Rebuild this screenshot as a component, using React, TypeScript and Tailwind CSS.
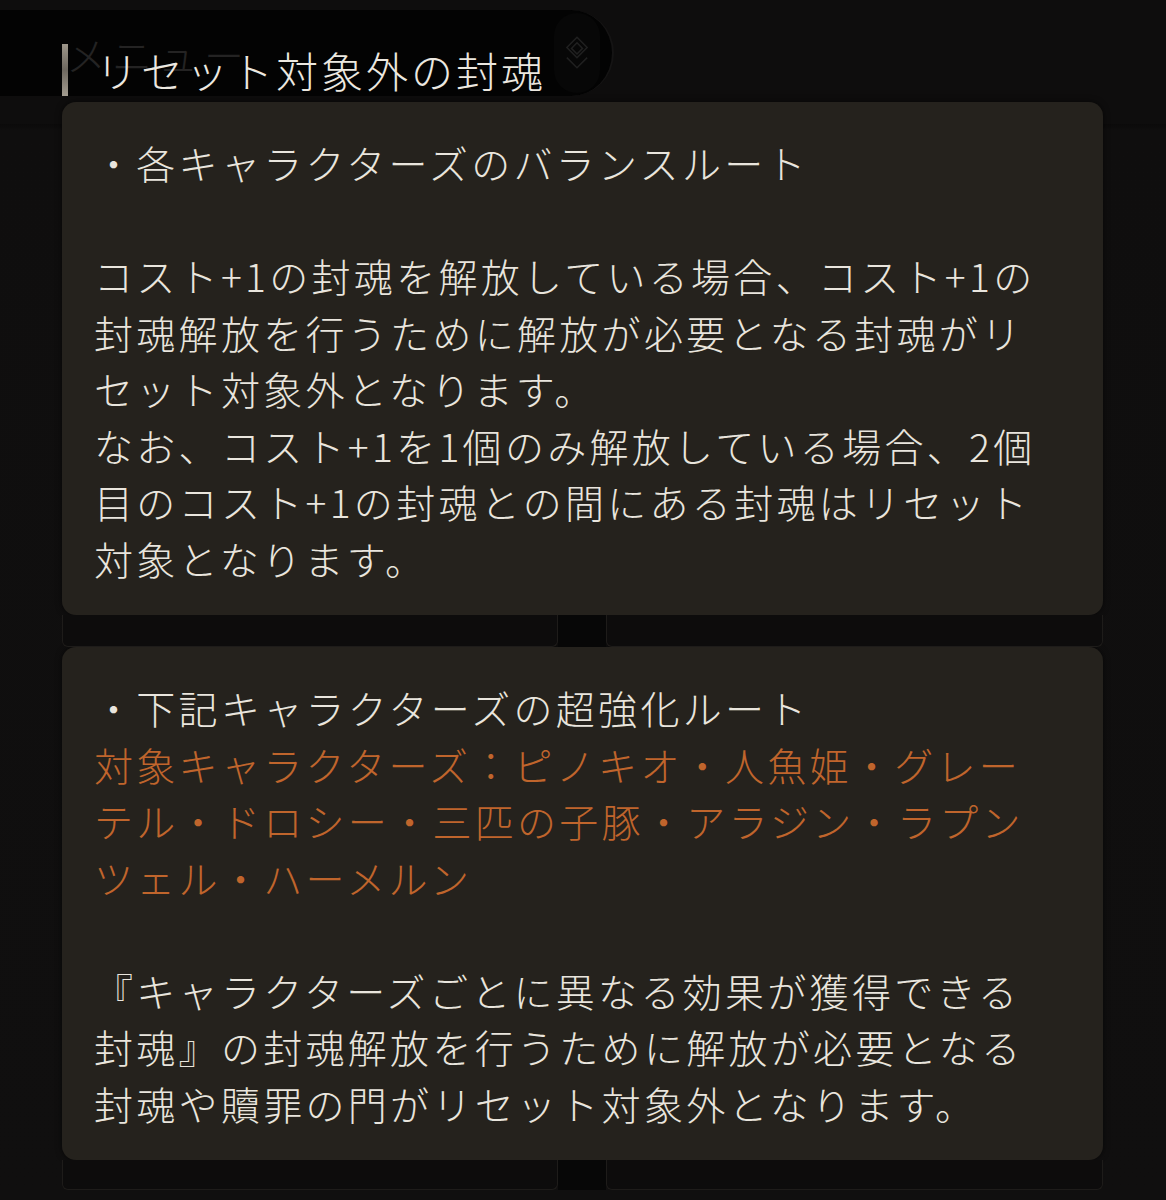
import { ReactNode } from "react";

const jp = "font-['Noto_Sans_CJK_JP','Noto_Sans',sans-serif]";

const Line = ({ children, orange }: { children?: ReactNode; orange?: boolean }) => (
  <div
    className={`h-[56.5px] whitespace-nowrap text-[39px] leading-[56.5px] tracking-[3.3px] font-light ${
      orange ? "text-[#c0652c]" : "text-[#e9e5dd]"
    }`}
  >
    {children ?? "\u00a0"}
  </div>
);

const Frames = ({ h }: { h: string }) => (
  <div className={`flex ${h} pl-[62px] pr-[63px]`}>
    <div className="w-[496px] rounded-b-md border-x border-b border-[#1e1c1a] bg-[#0d0c0c]" />
    <div className="w-[48px] bg-[#070707]" />
    <div className="flex-1 rounded-b-md border-x border-b border-[#1e1c1a] bg-[#0d0c0c]" />
  </div>
);

const Card = ({ children }: { children: ReactNode }) => (
  <div className="ml-[62px] w-[1041px] rounded-[14px] bg-[#25221d] pl-[32px] pt-[32px] pb-[29px] shadow-[0_0_6px_rgba(0,0,0,0.6)]">
    {children}
  </div>
);

export default function App() {
  return (
    <div
      className={`${jp} h-[1200px] w-[1166px] overflow-hidden bg-[linear-gradient(to_bottom,#0e0d0d_0px,#0e0d0d_124px,#0b0a0a_124px,#0f0e0e_130px,#100f0f_100%)]`}
    >
      {/* header */}
      <div className="relative h-[102px]">
        <div className="absolute left-0 top-[10px] flex h-[86px] w-[614px] items-center justify-end rounded-r-[44px] border-r-2 border-[#151414] bg-[#030303]">
          <span className="absolute left-[66px] top-[14px] text-[40px] font-light tracking-[6px] text-[#242323]">
            メニュー
          </span>
          <div className="mr-[12px] flex h-[80px] w-[46px] items-center justify-center rounded-full bg-[#070707]">
            <svg width="24" height="36" viewBox="0 0 26 38" fill="none" stroke="#202020" strokeWidth="1.6">
              <path d="M13 2 L24 13 L13 24 L2 13 Z" />
              <path d="M13 8 L19 14 L13 20 L7 14 Z" />
              <path d="M2 24 L13 35 L24 24" />
            </svg>
          </div>
        </div>
        <div className="relative flex items-center pl-[62px] pt-[44px]">
          <div className="h-[52px] w-[6px] bg-[linear-gradient(to_bottom,#9d968a,#6e685f,#a39c90)]" />
          <h1 className="ml-[28px] text-[42px] font-light leading-[52px] tracking-[3px] text-[#ece8e0]">
            リセット対象外の封魂
          </h1>
        </div>
      </div>

      <Card>
        <Line>・各キャラクターズのバランスルート</Line>
        <Line />
        <Line>コスト+1の封魂を解放している場合、コスト+1の</Line>
        <Line>封魂解放を行うために解放が必要となる封魂がリ</Line>
        <Line>セット対象外となります。</Line>
        <Line>なお、コスト+1を1個のみ解放している場合、2個</Line>
        <Line>目のコスト+1の封魂との間にある封魂はリセット</Line>
        <Line>対象となります。</Line>
      </Card>

      <Frames h="h-[32px]" />

      <Card>
        <Line>・下記キャラクターズの超強化ルート</Line>
        <Line orange>対象キャラクターズ：ピノキオ・人魚姫・グレー</Line>
        <Line orange>テル・ドロシー・三匹の子豚・アラジン・ラプン</Line>
        <Line orange>ツェル・ハーメルン</Line>
        <Line />
        <Line>『キャラクターズごとに異なる効果が獲得できる</Line>
        <Line>封魂』の封魂解放を行うために解放が必要となる</Line>
        <Line>封魂や贖罪の門がリセット対象外となります。</Line>
      </Card>

      <Frames h="h-[30px]" />
    </div>
  );
}
